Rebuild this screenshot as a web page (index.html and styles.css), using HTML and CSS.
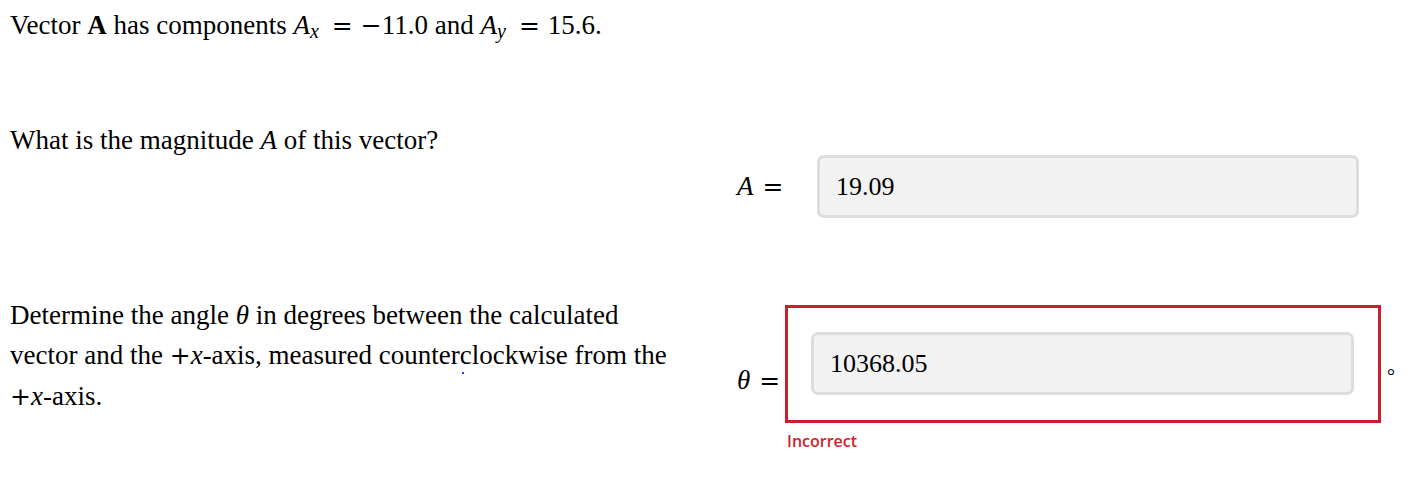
FILE: index.html
```html
<!DOCTYPE html>
<html>
<head>
<meta charset="utf-8">
<link rel="stylesheet" href="styles.css">
</head>
<body>
<div class="page">
  <p class="intro">Vector <b>A</b> has components <span class="m"><i>A</i><sub><i>x</i></sub></span><span class="eq">=</span><span class="op">−</span>11.0 and <span class="m"><i>A</i><sub><i>y</i></sub></span><span class="eq">=</span>15.6.</p>

  <div class="row row1">
    <div class="qtext">What is the magnitude <i>A</i> of this vector?</div>
    <div class="answer">
      <div class="label label1"><i>A</i><span class="eq">=</span></div>
      <div class="input">19.09</div>
    </div>
  </div>

  <div class="row row2">
    <div class="qtext">Determine the angle <i>θ</i> in degrees between the calculated<br>vector and the <span class="op">+</span><i>x</i>-axis, measured counter<span class="dotwrap">c<span class="bluedot"></span></span>lockwise from the<br><span class="op">+</span><i>x</i>-axis.</div>
    <div class="answer2">
      <div class="ansline">
        <div class="label label2"><i>θ</i><span class="eq">=</span></div>
        <div class="wrong">
          <div class="input">10368.05</div>
        </div>
        <div class="deg">°</div>
      </div>
      <div class="feedback">Incorrect</div>
    </div>
  </div>
</div>
</body>
</html>
```
FILE: styles.css
```css
html, body {
  margin: 0;
  padding: 0;
  background: #fff;
}
.page {
  font-family: "Liberation Serif", "Times New Roman", serif;
  font-size: 27px;
  color: #000;
  padding-left: 10px;
}
.intro {
  margin: 0;
  padding-top: 5px;
  line-height: 40px;
}
.intro sub {
  font-size: 20px;
  vertical-align: -4px;
  line-height: 0;
}
.eq, .op {
  font-family: "DejaVu Serif", serif;
  font-size: 25px;
}
.eq {
  margin: 0 8px 0 13px;
}
.row {
  display: flex;
}
.qtext {
  width: 727px;
  line-height: 40px;
  flex: none;
}
.row1 {
  margin-top: 74px;
}
.answer {
  display: flex;
  align-items: center;
  margin-top: 35px;
}
.label1 {
  width: 80px;
}
.label .eq {
  margin: 0 0 0 9px;
}
.input {
  box-sizing: border-box;
  width: 542px;
  height: 63px;
  background: #f2f2f2;
  border: 3px solid #dddddd;
  border-radius: 7px;
  padding-left: 16px;
  display: flex;
  align-items: center;
  font-size: 26px;
}
.row2 {
  margin-top: 77px;
}
.dotwrap {
  position: relative;
}
.bluedot {
  position: absolute;
  left: 2px;
  top: 32px;
  width: 2px;
  height: 2px;
  background: #2a3cf0;
}
.answer2 {
  margin-top: 10px;
}
.ansline {
  display: flex;
  align-items: flex-start;
}
.label2 {
  width: 48px;
  margin-top: 60px;
}
.wrong {
  box-sizing: border-box;
  width: 596px;
  height: 118px;
  border: 3px solid #cc1f2d;
  padding: 24px 24px 0 23px;
}
.wrong .input {
  width: 543px;
}
.deg {
  font-size: 20px;
  margin-left: 6px;
  margin-top: 60px;
}
.feedback {
  font-family: "Open Sans", "Liberation Sans", sans-serif;
  font-size: 16px;
  font-weight: 600;
  color: #cc1f2d;
  margin-left: 50px;
  margin-top: 7px;
}
```
